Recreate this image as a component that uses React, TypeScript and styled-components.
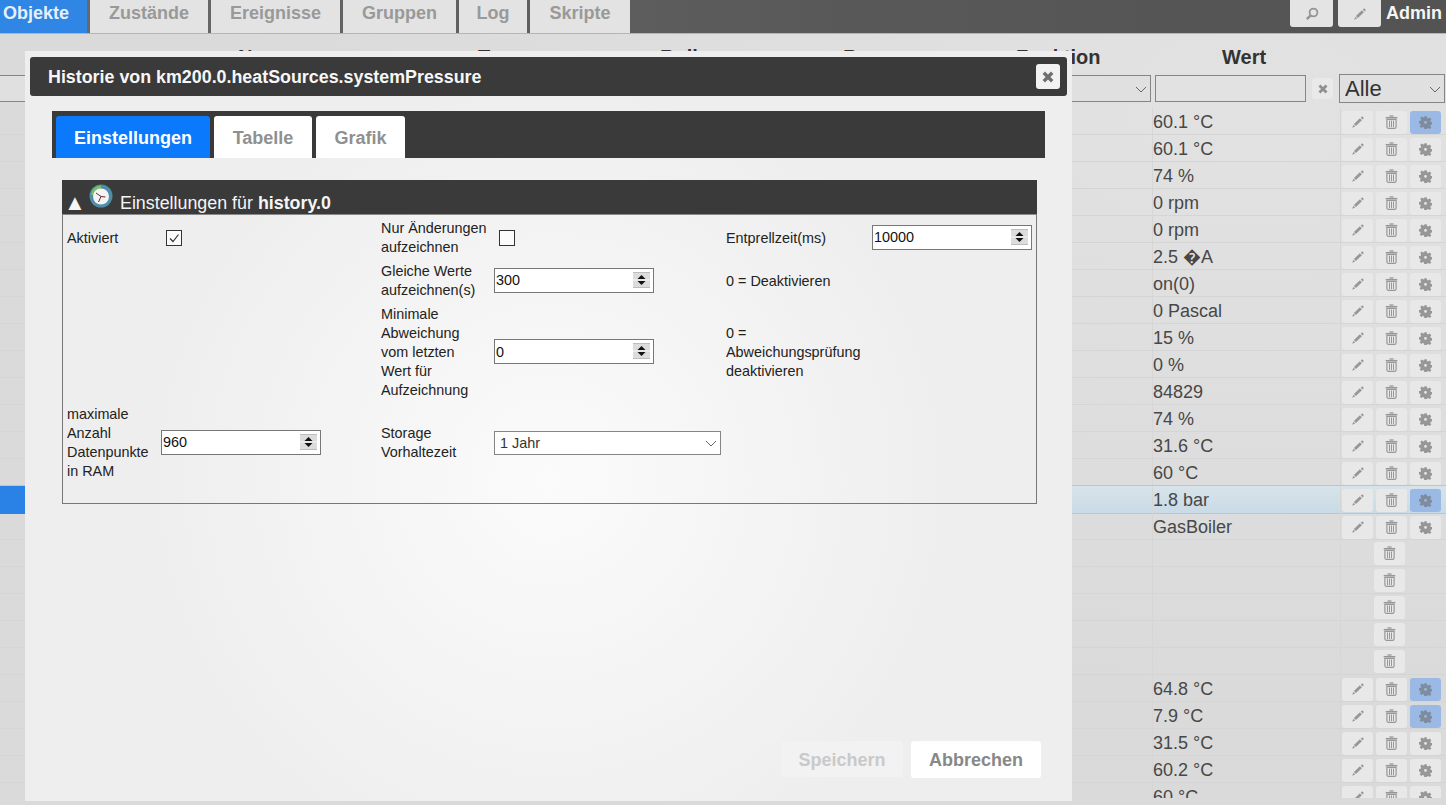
import React from "react";
import styled, { createGlobalStyle } from "styled-components";

const Global = createGlobalStyle`
  html, body { margin: 0; padding: 0; height: 100%; overflow: hidden; }
  body { font-family: "Liberation Sans", Arial, sans-serif; background: #dcdcdc; }
  #root { height: 100%; }
  * { box-sizing: border-box; }
`;

const Page = styled.div`
  position: relative;
  width: 1446px;
  height: 805px;
  overflow: hidden;
  background: radial-gradient(ellipse at 1250px 100px, #e2e2e2 0%, #dadada 60%);
`;

const TopBar = styled.div`
  height: 34px;
  display: flex;
  align-items: flex-start;
  background: linear-gradient(90deg, #6a6a6a 0%, #585858 60%, #535353 100%);
  border-bottom: 1px solid #b5b5b5;
`;
const TopTabs = styled.div`
  display: flex;
  gap: 3px;
  flex: 1;
`;
const TopTab = styled.div<{ $active?: boolean; $w: number }>`
  width: ${(p) => p.$w}px;
  height: 33px;
  padding: 3px ${(p) => (p.$active ? "0 0 3px" : "0")};
  text-align: ${(p) => (p.$active ? "left" : "center")};
  font-size: 18px;
  line-height: 21px;
  font-weight: 700;
  color: ${(p) => (p.$active ? "#e6f0fb" : "#999")};
  background: ${(p) => (p.$active ? "#2f86e4" : "#e3e3e3")};
`;
const TopButton = styled.div`
  width: 43px;
  height: 27px;
  margin-right: 5px;
  border-radius: 0 0 3px 3px;
  background: #e4e4e4;
  display: flex;
  align-items: center;
  justify-content: center;
  color: #959595;
`;
const AdminName = styled.div`
  width: 60px;
  font-size: 18px;
  line-height: 21px;
  padding-top: 3px;
  font-weight: 700;
  color: #f5f5f5;
`;

const HeadRow = styled.div`
  display: grid;
  grid-template-columns: 238px 240px 182px 183px 173px 206px 1fr;
  height: 40px;
  padding-top: 11px;
  font-size: 20px;
  line-height: 24px;
  font-weight: 700;
  color: #333;
`;
const FilterRow = styled.div`
  display: flex;
  align-items: center;
  height: 29px;
  margin-bottom: 5px;
`;
const SelectWrap = styled.div<{ $w: number; $h: number; $ml: number }>`
  position: relative;
  width: ${(p) => p.$w}px;
  height: ${(p) => p.$h}px;
  margin-left: ${(p) => p.$ml}px;
  flex: none;
`;
const NativeSelect = styled.select<{ $size: number; $bg: string }>`
  appearance: none;
  width: 100%;
  height: 100%;
  border: 1px solid #858585;
  border-radius: 0;
  padding: 0 5px;
  font-family: "Liberation Sans", Arial, sans-serif;
  font-size: ${(p) => p.$size}px;
  color: #333;
  background: ${(p) => p.$bg};
  outline: none;
`;
const Chevron = styled.svg`
  position: absolute;
  right: 4px;
  top: 50%;
  margin-top: -3px;
  width: 12px;
  height: 7px;
  pointer-events: none;
`;
const FilterInput = styled.input`
  width: 151px;
  height: 27px;
  margin-left: 4px;
  border: 1px solid #858585;
  background: #e2e2e2;
  outline: none;
`;
const ClearButton = styled.div`
  width: 21px;
  height: 21px;
  margin-left: 6px;
  border-radius: 3px;
  background: #e9e9e9;
  color: #8f8f8f;
  display: flex;
  align-items: center;
  justify-content: center;
`;

const RowsArea = styled.div`
  height: 690px;
  overflow: hidden;
`;
const Row = styled.div<{ $selected?: boolean }>`
  display: grid;
  grid-template-columns: 1152px 188px 1fr;
  height: ${(p) => (p.$selected ? "29px" : "27px")};
  margin: ${(p) => (p.$selected ? "-1px 0" : "0")};
  position: ${(p) => (p.$selected ? "relative" : "static")};
  border-bottom: 1px solid ${(p) => (p.$selected ? "#a9cbe0" : "#d5d5d5")};
  border-top: ${(p) => (p.$selected ? "1px solid #a9cbe0" : "0")};
  background: ${(p) => (p.$selected ? "linear-gradient(#d8e3ea, #c9dbe6)" : "transparent")};
`;
const NameCell = styled.div<{ $selected?: boolean }>`
  background: ${(p) => (p.$selected ? "linear-gradient(90deg, #2a82e6 0 200px, transparent 200px)" : "transparent")};
`;
const ValueCell = styled.div`
  border-left: 1px solid #d6d6d6;
  font-size: 18px;
  line-height: 28px;
  color: #474747;
  white-space: nowrap;
`;
const ActionCell = styled.div<{ $center?: boolean }>`
  border-left: 1px solid #d6d6d6;
  display: flex;
  align-items: center;
  gap: 3px;
  padding-left: ${(p) => (p.$center ? "33px" : "1px")};
`;
const RowButton = styled.div<{ $on?: boolean }>`
  width: 31px;
  height: 23px;
  border-radius: 3px;
  background: ${(p) => (p.$on ? "#9ab9e4" : "#e8e8e8")};
  color: ${(p) => (p.$on ? "#7f8c9e" : "#979797")};
  display: flex;
  align-items: center;
  justify-content: center;
`;

const Dialog = styled.div`
  position: absolute;
  left: 25px;
  top: 51px;
  width: 1047px;
  height: 750px;
  padding: 6px 5px 0;
  display: flex;
  flex-direction: column;
  background: radial-gradient(circle at 525px 430px, #fbfbfb 0%, #f4f4f4 32%, #eeeeee 60%);
`;
const TitleBar = styled.div`
  height: 39px;
  flex: none;
  display: flex;
  align-items: center;
  justify-content: space-between;
  padding: 2px 7px 0 18px;
  border-radius: 3px;
  background: #3a3a3a;
  font-size: 17.85px;
  font-weight: 700;
  color: #f7f7f7;
`;
const CloseButton = styled.div`
  width: 24px;
  height: 25px;
  margin-top: -2px;
  border-radius: 3px;
  background: #f2f2f2;
  color: #6f6f6f;
  display: flex;
  align-items: center;
  justify-content: center;
`;
const DialogTabs = styled.div`
  margin: 15px 22px 0;
  height: 47px;
  flex: none;
  padding: 5px 0 0 4px;
  display: flex;
  align-items: stretch;
  gap: 4px;
  background: #3a3a3a;
`;
const DialogTab = styled.div<{ $active?: boolean; $w: number }>`
  width: ${(p) => p.$w}px;
  border-radius: 3px 3px 0 0;
  text-align: center;
  font-size: 18px;
  line-height: 44px;
  font-weight: 700;
  color: ${(p) => (p.$active ? "#fff" : "#909090")};
  background: ${(p) => (p.$active ? "#0a79fb" : "#fff")};
`;
const SettingsHead = styled.div`
  margin: 22px 30px 0 32px;
  height: 34px;
  flex: none;
  display: flex;
  align-items: flex-start;
  background: #3a3a3a;
  color: #f5f5f5;
  font-size: 17.85px;
`;
const Triangle = styled.span`
  margin: 11px 0 0 2px;
  width: 19px;
  font-size: 22px;
  line-height: 23px;
  white-space: nowrap;
`;
const ClockIcon = styled.svg`
  margin: 4px 0 0 6px;
  width: 24px;
  height: 24px;
`;
const HeadText = styled.span`
  margin: 13px 0 0 7px;
  line-height: 21px;
  white-space: nowrap;
`;
const SettingsBox = styled.div`
  margin: 0 30px 0 32px;
  height: 290px;
  flex: none;
  padding: 4px 0 0 4px;
  border: 1px solid #777;
  border-top-color: #8a8a8a;
  display: grid;
  grid-template-columns: 94px 220px 113px 232px 146px 160px;
  grid-template-rows: 38px 38px 95px 76px;
  row-gap: 5px;
  font-size: 14.4px;
  line-height: 19px;
  color: #222;
`;
const Label = styled.div<{ $column?: number }>`
  align-self: center;
  padding-right: 10px;
  grid-column: ${(p) => p.$column ?? "auto"};
`;
const WideLabel = styled(Label)`
  padding-right: 0;
  white-space: nowrap;
`;
const Cell = styled.div<{ $span?: number }>`
  align-self: center;
  grid-column: ${(p) => (p.$span ? `span ${p.$span}` : "auto")};
`;
const Note = styled.div`
  align-self: center;
  width: 140px;
`;
const NumberField = styled.div`
  position: relative;
  width: 160px;
  height: 25px;
  margin-bottom: 2px;
`;
const NumberInput = styled.input`
  display: block;
  width: 100%;
  height: 100%;
  padding: 0 3px 0 1px;
  border: 1px solid #777;
  background: #fff;
  font-family: "Liberation Sans", Arial, sans-serif;
  font-size: 14.4px;
  color: #111;
  outline: none;
  appearance: textfield;
  &::-webkit-inner-spin-button,
  &::-webkit-outer-spin-button {
    appearance: none;
    margin: 0;
  }
`;
const SpinnerGlyph = styled.svg`
  position: absolute;
  right: 4px;
  top: 4px;
  width: 17px;
  height: 16px;
  pointer-events: none;
`;
const CheckBox = styled.div<{ $ml: number }>`
  width: 16px;
  height: 16px;
  margin-left: ${(p) => p.$ml}px;
  border: 1px solid #333;
  background: #fbfbfb;
  display: flex;
  align-items: center;
  justify-content: center;
`;
const Footer = styled.div`
  flex: 1;
  display: flex;
  align-items: flex-end;
  justify-content: flex-end;
  gap: 8px;
  padding: 0 26px 23px 0;
`;
const FooterButton = styled.div<{ $disabled?: boolean; $w: number }>`
  width: ${(p) => p.$w}px;
  height: ${(p) => (p.$disabled ? 36 : 37)}px;
  margin-bottom: ${(p) => (p.$disabled ? 1 : 0)}px;
  border-radius: 3px;
  text-align: center;
  font-size: 18px;
  line-height: 38px;
  font-weight: 700;
  color: ${(p) => (p.$disabled ? "#c9c9c9" : "#888")};
  background: ${(p) => (p.$disabled ? "#f2f2f2" : "#fff")};
`;

const PencilIcon = () => (
  <svg width="14" height="14" viewBox="0 0 14 14" fill="currentColor">
    <path d="M8.9 3.2 10.9 5.2 4.9 11 2.9 9.1Z" />
    <path d="M9.8 2.4 11.2 1.2 12.9 2.9 11.6 4.4Z" />
    <path d="M2.4 9.8 4.2 11.6 1.2 12.8Z" />
  </svg>
);
const TrashIcon = () => (
  <svg width="13" height="14" viewBox="0 0 13 14" fill="none" stroke="currentColor">
    <path d="M.7 2.7h11.6" strokeWidth="1.5" />
    <path d="M4.5 1h4" strokeWidth="1.3" />
    <path d="M1.9 4.4h9.2v7.4c0 .9-.7 1.6-1.6 1.6h-6c-.9 0-1.6-.7-1.6-1.6Z" strokeWidth="1.2" />
    <path d="M4.5 5.5v6.6M6.5 5.5v6.6M8.5 5.5v6.6" strokeWidth="1" />
  </svg>
);
const GearIcon = () => (
  <svg width="13" height="13" viewBox="0 0 13 13" fill="currentColor">
    <path
      fillRule="evenodd"
      d="M5.3.3h2.4l.3 1.8 1.2.5 1.5-1 1.6 1.6-1 1.5.5 1.2 1.7.3v2.3l-1.7.3-.5 1.2 1 1.5-1.6 1.5-1.5-1-1.2.5-.3 1.7H5.3L5 11.4l-1.2-.5-1.5 1L.7 10.4l1-1.5-.5-1.2L0 7.4V5.1l1.7-.3.5-1.2-1-1.5L2.8.5l1.5 1 1.2-.5ZM6.5 5a1.3 1.3 0 1 0 0 2.8 1.3 1.3 0 0 0 0-2.8Z"
    />
  </svg>
);
const SearchIcon = () => (
  <svg width="14" height="14" viewBox="0 0 14 14" fill="none" stroke="currentColor">
    <circle cx="8.5" cy="5.5" r="3.9" strokeWidth="1.8" />
    <path d="M5.7 8.3 1.8 12.2" strokeWidth="2.4" />
  </svg>
);
const CrossIcon = ({ size = 10 }: { size?: number }) => (
  <svg width={size} height={size} viewBox="0 0 10 10" fill="none" stroke="currentColor">
    <path d="M1.5 1.5 8.5 8.5M8.5 1.5 1.5 8.5" strokeWidth="2.8" />
  </svg>
);
const DownChevron = () => (
  <Chevron viewBox="0 0 12 7" fill="none" stroke="#666">
    <path d="M1 1 6 6 11 1" strokeWidth="1" />
  </Chevron>
);
const Spinner = () => (
  <SpinnerGlyph viewBox="0 0 17 16">
    <rect width="17" height="16" fill="#dcdcdc" />
    <rect y="7.5" width="17" height="1" fill="#f6f6f6" />
    <rect y="0" width="17" height="1" fill="#bdbdbd" />
    <rect y="15" width="17" height="1" fill="#bdbdbd" />
    <path d="M8.5 3 12.5 7H4.5Z M4.5 9H12.5L8.5 13Z" fill="#111" />
  </SpinnerGlyph>
);

const Clock = () => (
  <ClockIcon viewBox="0 0 24 24">
    <circle cx="12" cy="12" r="11.5" fill="#4f8da8" />
    <path d="M2 11A10 10 0 0 1 12 1.5V6A6 6 0 0 0 6 11Z" fill="#7fbf6a" />
    <circle cx="12" cy="12.5" r="8" fill="#f4f4f4" />
    <path d="M12 12.5 7 9M12 12.5 16.5 13M12 12.5 9.5 18" stroke="#6a2a2a" strokeWidth="1" fill="none" />
  </ClockIcon>
);

const NumberBox = ({ value }: { value: number }) => (
  <NumberField>
    <NumberInput type="number" defaultValue={value} />
    <Spinner />
  </NumberField>
);

type RowData = { value?: string; on?: boolean; selected?: boolean };
const rows: RowData[] = [
  { value: "60.1 °C", on: true },
  { value: "60.1 °C" },
  { value: "74 %" },
  { value: "0 rpm" },
  { value: "0 rpm" },
  { value: "2.5 �A" },
  { value: "on(0)" },
  { value: "0 Pascal" },
  { value: "15 %" },
  { value: "0 %" },
  { value: "84829" },
  { value: "74 %" },
  { value: "31.6 °C" },
  { value: "60 °C" },
  { value: "1.8 bar", on: true, selected: true },
  { value: "GasBoiler" },
  {},
  {},
  {},
  {},
  {},
  { value: "64.8 °C", on: true },
  { value: "7.9 °C", on: true },
  { value: "31.5 °C" },
  { value: "60.2 °C" },
  { value: "60 °C" },
];

const tabs: [string, number, boolean?][] = [
  ["Objekte", 87, true],
  ["Zustände", 118],
  ["Ereignisse", 129],
  ["Gruppen", 113],
  ["Log", 68],
  ["Skripte", 100],
];

export default function App() {
  return (
    <Page>
      <Global />
      <TopBar>
        <TopTabs>
          {tabs.map(([label, w, active]) => (
            <TopTab key={label} $w={w} $active={active}>
              {label}
            </TopTab>
          ))}
        </TopTabs>
        <TopButton>
          <SearchIcon />
        </TopButton>
        <TopButton>
          <PencilIcon />
        </TopButton>
        <AdminName>Admin</AdminName>
      </TopBar>

      <HeadRow>
        <span />
        <span>Name</span>
        <span>Typ</span>
        <span>Rolle</span>
        <span>Raum</span>
        <span>Funktion</span>
        <span>Wert</span>
      </HeadRow>
      <FilterRow>
        <SelectWrap $w={1152} $h={27} $ml={-1}>
          <NativeSelect $size={14} $bg="#e0e0e0" />
          <DownChevron />
        </SelectWrap>
        <FilterInput />
        <ClearButton>
          <CrossIcon />
        </ClearButton>
        <SelectWrap $w={106} $h={29} $ml={6}>
          <NativeSelect $size={22} $bg="#e0e0e0">
            <option>Alle</option>
          </NativeSelect>
          <DownChevron />
        </SelectWrap>
      </FilterRow>

      <RowsArea>
        {rows.map((r, i) => (
          <Row key={i} $selected={r.selected}>
            <NameCell $selected={r.selected} />
            <ValueCell>{r.value}</ValueCell>
            {r.value ? (
              <ActionCell>
                <RowButton>
                  <PencilIcon />
                </RowButton>
                <RowButton>
                  <TrashIcon />
                </RowButton>
                <RowButton $on={r.on}>
                  <GearIcon />
                </RowButton>
              </ActionCell>
            ) : (
              <ActionCell $center>
                <RowButton>
                  <TrashIcon />
                </RowButton>
              </ActionCell>
            )}
          </Row>
        ))}
      </RowsArea>

      <Dialog>
        <TitleBar>
          <span>Historie von km200.0.heatSources.systemPressure</span>
          <CloseButton>
            <CrossIcon size={12} />
          </CloseButton>
        </TitleBar>
        <DialogTabs>
          <DialogTab $active $w={154}>
            Einstellungen
          </DialogTab>
          <DialogTab $w={98}>Tabelle</DialogTab>
          <DialogTab $w={89}>Grafik</DialogTab>
        </DialogTabs>
        <SettingsHead>
          <Triangle>▲</Triangle>
          <Clock />
          <HeadText>
            Einstellungen für <b>history.0</b>
          </HeadText>
        </SettingsHead>
        <SettingsBox>
          <Label>Aktiviert</Label>
          <Cell>
            <CheckBox $ml={5}>
              <svg width="12" height="12" viewBox="0 0 12 12" fill="none" stroke="#333">
                <path d="M2 6.5 5 9.5 10.5 2.5" strokeWidth="1.2" />
              </svg>
            </CheckBox>
          </Cell>
          <WideLabel>
            Nur Änderungen
            <br />
            aufzeichnen
          </WideLabel>
          <Cell>
            <CheckBox $ml={5} />
          </Cell>
          <Label>Entprellzeit(ms)</Label>
          <Cell>
            <NumberBox value={10000} />
          </Cell>

          <WideLabel $column={3}>
            Gleiche Werte
            <br />
            aufzeichnen(s)
          </WideLabel>
          <Cell>
            <NumberBox value={300} />
          </Cell>
          <Note>0 = Deaktivieren</Note>

          <Label $column={3}>Minimale Abweichung vom letzten Wert für Aufzeichnung</Label>
          <Cell>
            <NumberBox value={0} />
          </Cell>
          <Note>0 = Abweichungsprüfung deaktivieren</Note>

          <Label $column={1}>maximale Anzahl Datenpunkte in RAM</Label>
          <Cell>
            <NumberBox value={960} />
          </Cell>
          <Label>Storage Vorhaltezeit</Label>
          <Cell $span={2}>
            <SelectWrap $w={227} $h={24} $ml={0}>
              <NativeSelect $size={14.4} $bg="#fff">
                <option>1 Jahr</option>
              </NativeSelect>
              <DownChevron />
            </SelectWrap>
          </Cell>
        </SettingsBox>
        <Footer>
          <FooterButton $disabled $w={122}>
            Speichern
          </FooterButton>
          <FooterButton $w={130}>Abbrechen</FooterButton>
        </Footer>
      </Dialog>
    </Page>
  );
}
